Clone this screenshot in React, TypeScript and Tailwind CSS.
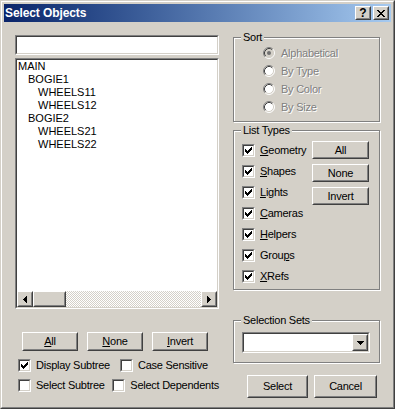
import React from "react";

const raised =
  "border border-t-white border-l-white border-r-[#404040] border-b-[#404040]";
const raisedInner =
  "border border-t-[#d4d0c8] border-l-[#d4d0c8] border-r-[#808080] border-b-[#808080]";
const sunken =
  "border border-t-[#808080] border-l-[#808080] border-r-white border-b-white";
const sunkenInner =
  "border border-t-[#404040] border-l-[#404040] border-r-[#d4d0c8] border-b-[#d4d0c8]";

function Btn({ children, className = "" }: { children: React.ReactNode; className?: string }) {
  return (
    <div className={`${raised} flex bg-[#d4d0c8] ${className}`}>
      <div className={`${raisedInner} flex-1 flex items-center justify-center whitespace-nowrap`}>
        {children}
      </div>
    </div>
  );
}

const checkPath = [2, 3, 4, 3, 2, 1, 0]
  .map((t, c) => `M${1 + c} ${1 + t}h1v3h-1z`)
  .join(" ");

function Check({ checked }: { checked?: boolean }) {
  return (
    <div className={`${sunken} w-[13px] h-[13px] shrink-0`}>
      <div className={`${sunkenInner} w-full h-full bg-white relative`}>
        {checked && (
          <svg className="absolute left-0 top-0" width="9" height="9" viewBox="0 0 9 9" shapeRendering="crispEdges">
            <path d={checkPath} fill="#000" />
          </svg>
        )}
      </div>
    </div>
  );
}

function Radio({ selected }: { selected?: boolean }) {
  return (
    <svg width="12" height="12" viewBox="0 0 12 12" className="shrink-0">
      <circle cx="6" cy="6" r="5" fill={selected ? "#d4d0c8" : "#ffffff"} />
      <path d="M2.11 9.89 A5.5 5.5 0 0 1 9.89 2.11" fill="none" stroke="#808080" strokeWidth="1" />
      <path d="M2.82 9.18 A4.5 4.5 0 0 1 9.18 2.82" fill="none" stroke="#404040" strokeWidth="1" />
      <path d="M9.89 2.11 A5.5 5.5 0 0 1 2.11 9.89" fill="none" stroke="#ffffff" strokeWidth="1" />
      <path d="M9.18 2.82 A4.5 4.5 0 0 1 2.82 9.18" fill="none" stroke="#d4d0c8" strokeWidth="1" />
      {selected && <circle cx="6" cy="6" r="2" fill="#707070" />}
    </svg>
  );
}

function Group({
  label,
  className = "",
  children,
}: {
  label: string;
  className?: string;
  children?: React.ReactNode;
}) {
  return (
    <div
      className={`relative border border-[#808080] shadow-[inset_1px_1px_0_#fff,1px_1px_0_#fff] ${className}`}
    >
      <span className="absolute -top-[7px] left-[7px] px-[2px] bg-[#d4d0c8] leading-[13px] whitespace-nowrap">
        {label}
      </span>
      {children}
    </div>
  );
}

function U({ children }: { children: React.ReactNode }) {
  return <span className="underline underline-offset-[1px]">{children}</span>;
}

const leftArrow = "M0 3h1v1h-1z M1 2h1v3h-1z M2 1h1v5h-1z M3 0h1v7h-1z";
const rightArrow = "M3 3h1v1h-1z M2 2h1v3h-1z M1 1h1v5h-1z M0 0h1v7h-1z";
const downArrow = "M0 0h7v1h-7z M1 1h5v1h-5z M2 2h3v1h-3z M3 3h1v1h-1z";
const xGlyph =
  "M0 0h2v1h-2z M6 0h2v1h-2z M1 1h2v1h-2z M5 1h2v1h-2z M2 2h4v1h-4z M3 3h2v1h-2z M2 4h4v1h-4z M1 5h2v1h-2z M5 5h2v1h-2z M0 6h2v1h-2z M6 6h2v1h-2z";

export default function App() {
  const tree: [string, number][] = [
    ["MAIN", 0],
    ["BOGIE1", 1],
    ["WHEELS11", 2],
    ["WHEELS12", 2],
    ["BOGIE2", 1],
    ["WHEELS21", 2],
    ["WHEELS22", 2],
  ];
  const types: [React.ReactNode][] = [
    [<><U>G</U>eometry</>],
    [<><U>S</U>hapes</>],
    [<><U>L</U>ights</>],
    [<><U>C</U>ameras</>],
    [<><U>H</U>elpers</>],
    [<>Grou<U>p</U>s</>],
    [<><U>X</U>Refs</>],
  ];
  const sorts = ["Alphabetical", "By Type", "By Color", "By Size"];

  return (
    <div className="w-[395px] h-[409px] bg-[#d4d0c8] border border-t-[#d4d0c8] border-l-[#d4d0c8] border-r-[#404040] border-b-[#404040] font-['Liberation_Sans',Arial,sans-serif] text-[11px] leading-[13px] tracking-[-0.25px] text-black select-none">
      <div className="w-full h-full border border-t-white border-l-white border-r-[#808080] border-b-[#808080] p-[2px] flex flex-col">
        {/* Title bar */}
        <div className="h-[18px] shrink-0 flex items-center bg-linear-to-r from-[#0a246a] to-[#a6caf0] pl-[1px] pr-[2px]">
          <span className="text-white font-bold text-[12px] leading-[18px] whitespace-nowrap tracking-[-0.1px]">
            Select Objects
          </span>
          <div className="ml-auto flex gap-[2px]">
            <Btn className="w-[16px] h-[14px]">
              <span className="font-bold text-[12px] leading-[10px] tracking-normal">?</span>
            </Btn>
            <Btn className="w-[16px] h-[14px]">
              <svg width="8" height="7" viewBox="0 0 8 7" shapeRendering="crispEdges">
                <path d={xGlyph} fill="#000" />
              </svg>
            </Btn>
          </div>
        </div>

        {/* Client */}
        <div className="flex flex-1">
          {/* Left column */}
          <div className="ml-[11px] w-[204px] flex flex-col shrink-0">
            <div className={`${sunken} mt-[13px] h-[20px]`}>
              <div className={`${sunkenInner} w-full h-full bg-white`} />
            </div>
            <div className={`${sunken} mt-[3px] h-[251px]`}>
              <div className={`${sunkenInner} w-full h-full bg-white flex flex-col`}>
                <div className="flex-1 flex flex-col tracking-normal">
                  {tree.map(([name, lvl]) => (
                    <div
                      key={name}
                      className={`h-[13px] whitespace-nowrap ${
                        lvl === 0 ? "pl-[1px]" : lvl === 1 ? "pl-[11px]" : "pl-[21px]"
                      }`}
                    >
                      {name}
                    </div>
                  ))}
                </div>
                <div className="h-[16px] flex shrink-0">
                  <Btn className="w-[16px] h-[16px]">
                    <svg width="4" height="7" viewBox="0 0 4 7" shapeRendering="crispEdges">
                      <path d={leftArrow} fill="#000" />
                    </svg>
                  </Btn>
                  <Btn className="w-[33px] h-[16px]">
                    <span />
                  </Btn>
                  <div className="flex-1 bg-[repeating-conic-gradient(#d4d0c8_0%_25%,#ffffff_0%_50%)] bg-[length:2px_2px]" />
                  <Btn className="w-[16px] h-[16px]">
                    <svg width="4" height="7" viewBox="0 0 4 7" shapeRendering="crispEdges">
                      <path d={rightArrow} fill="#000" />
                    </svg>
                  </Btn>
                </div>
              </div>
            </div>

            <div className="mt-[23px] flex gap-[9px] pl-[7px]">
              <Btn className="w-[56px] h-[19px]">
                <U>A</U>ll
              </Btn>
              <Btn className="w-[56px] h-[19px]">
                <U>N</U>one
              </Btn>
              <Btn className="w-[56px] h-[19px]">
                <U>I</U>nvert
              </Btn>
            </div>

            <div className="mt-[8px] flex pl-[3px] h-[13px]">
              <div className="w-[102px] flex items-center gap-[5px] whitespace-nowrap">
                <Check checked />
                <span>Display Subtree</span>
              </div>
              <div className="flex items-center gap-[5px] whitespace-nowrap">
                <Check />
                <span>Case Sensitive</span>
              </div>
            </div>
            <div className="mt-[7px] flex pl-[3px] h-[13px]">
              <div className="w-[102px] flex items-center gap-[5px] whitespace-nowrap">
                <Check />
                <span>Select Subtree</span>
              </div>
              <div className="flex items-center gap-[5px] whitespace-nowrap">
                <Check />
                <span>Select Dependents</span>
              </div>
            </div>
          </div>

          {/* Right column */}
          <div className="ml-[14px] w-[147px] flex flex-col shrink-0">
            <Group label="Sort" className="mt-[15px] h-[85px]">
              <div className="pt-[6px] pl-[29px] flex flex-col">
                {sorts.map((s, i) => (
                  <div key={s} className="h-[18px] flex items-center gap-[6px]">
                    <Radio selected={i === 0} />
                    <span className="text-[#808080] [text-shadow:1px_1px_0_#fff] whitespace-nowrap">
                      {s}
                    </span>
                  </div>
                ))}
              </div>
            </Group>

            <Group label="List Types" className="mt-[8px] h-[160px]">
              <div className="pt-[9px] pl-[8px] flex">
                <div className="w-[70px] flex flex-col">
                  {types.map(([t], i) => (
                    <div key={i} className="h-[21px] flex items-center gap-[5px] whitespace-nowrap">
                      <Check checked />
                      <span>{t}</span>
                    </div>
                  ))}
                </div>
                <div className="mt-[1px] flex flex-col gap-[5px]">
                  <Btn className="w-[57px] h-[18px]">All</Btn>
                  <Btn className="w-[57px] h-[18px]">None</Btn>
                  <Btn className="w-[57px] h-[18px]">Invert</Btn>
                </div>
              </div>
            </Group>

            <Group label="Selection Sets" className="mt-[30px] h-[43px]">
              <div className="pt-[11px] pl-[8px]">
                <div className={`${sunken} w-[128px] h-[21px]`}>
                  <div className={`${sunkenInner} w-full h-full bg-white flex justify-end`}>
                    <Btn className="w-[16px] h-full">
                      <svg width="7" height="4" viewBox="0 0 7 4" shapeRendering="crispEdges">
                        <path d={downArrow} fill="#000" />
                      </svg>
                    </Btn>
                  </div>
                </div>
              </div>
            </Group>

            <div className="mt-[12px] flex gap-[6px] pl-[14px]">
              <Btn className="w-[61px] h-[23px]">Select</Btn>
              <Btn className="w-[63px] h-[23px]">Cancel</Btn>
            </div>
          </div>
        </div>
      </div>
    </div>
  );
}
